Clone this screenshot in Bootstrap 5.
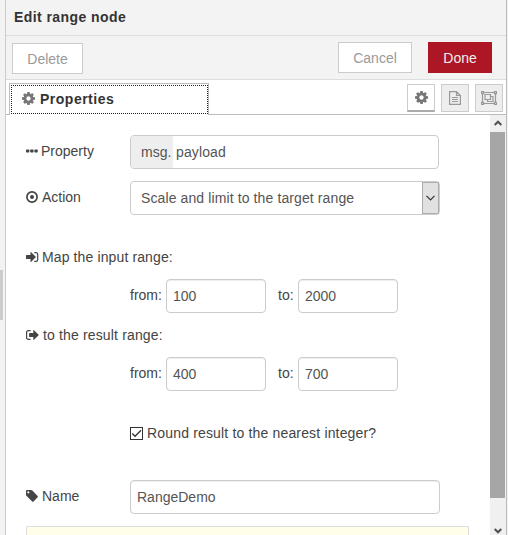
<!DOCTYPE html>
<html lang="en">
<head>
<meta charset="utf-8">
<meta name="viewport" content="width=device-width, initial-scale=1">
<title>Edit range node</title>
<link href="https://cdn.jsdelivr.net/npm/bootstrap@5.3.0/dist/css/bootstrap.min.css" rel="stylesheet">
<style>
body{font:14px/20px "Liberation Sans",Arial,sans-serif;color:#444;background:#fff}
svg{display:block;flex:none}
.shell{height:535px}
.gutter{width:6px;background:#f3f3f3;border-right:1px solid #ccc}
.grip{width:3px;height:50px;background:#ccc;margin-top:55px}
.edge{width:2px;background:#f3f3f3;border-left:1px solid #bbb}
.tray-title{height:36px;background:#f3f3f3;border-bottom:1px solid #ddd;padding:0 0 2px 8px;color:#333;font-weight:700;letter-spacing:.42px}
.tray-bar{height:44px;background:#f3f3f3;border-bottom:1px solid #ddd;padding:6px 14px 0 6px}
.tray-bar .btn{height:31px;border-radius:0;font-size:14px;line-height:20px;padding:5px 14px;background:#fff;border:1px solid #ccc;color:#999}
.tray-bar .btn-done{background:#ad1625;border-color:#ad1625;color:#eee;width:64px}
.btn-cancel{width:74px}
.btn-delete{width:71px;margin-top:1px}
.tabs-strip{height:35px;border-bottom:1px solid #bbb;padding:3px 3px 0 3px}
.tab-main{width:200px;height:32px;border:1px solid #bbb;border-bottom:0;background:#fff;padding:1px 0 1px 1px;margin-bottom:-1px}
.tab-focus{border:1px dotted #222;height:29px;padding:0 0 2px 10px;gap:5px;color:#333;font-weight:700;letter-spacing:.5px}
.tab-focus svg{color:#777}
.tab-set{gap:6px}
.tab-small{width:28px;height:28px;border:1px solid #ccc;background:#eee;color:#999;margin-top:1px}
.tab-small.on{background:#fff;border-bottom:2px solid #aaa;color:#777}
.form-area{padding:20px 0 0 20px;width:484px}
.bar{width:16px;background:#f0f0f0;color:#505050}
.bar-btn{height:17px;padding-bottom:1px}
.bar-end{padding-bottom:1px}
.thumb{height:366px;background:#a6a6a6;width:15px}
.lbl{width:104px;padding-bottom:2px;gap:4px}
.lbl-prop{gap:3px}
.field{height:34px;border:1px solid #ccc;border-radius:4px;background:#fff;color:#555;font-size:14px;line-height:20px;padding:0 6px;box-shadow:inset 0 1px 1px rgba(0,0,0,.07)}
.field:focus{outline:0}
.w-wide{width:310px}
.w-num{width:100px}
.typed{width:309px;padding:0;box-shadow:none;overflow:hidden}
.prefix{width:42px;background:#eee;padding-left:10px}
.payload{padding-left:3px;letter-spacing:.12px}
.pick{padding:0 0 0 10px;box-shadow:none;letter-spacing:.11px}
.drop{width:17px;height:32px;background:#e1e1e1;border:1px solid #adadad;color:#333}
.mark-box{width:13px;height:13px;border:1px solid #333}
.tip{width:443px;height:9px;background:#ffffe9;border:1px solid #ddd;border-bottom:0;border-radius:2px 2px 0 0;margin-top:12px}
.range-row{padding-left:104px}
.from{width:36px;padding-bottom:2px}
.to{width:20px;margin-left:12px;padding-bottom:2px}
.row-action{margin-top:12px}
.sect{height:20px;margin-top:32px;margin-bottom:12px;gap:3px;letter-spacing:.12px}
.sect-b{margin-top:12px;gap:4px;letter-spacing:.15px}
.round-row{height:20px;margin-top:32px;letter-spacing:.165px}
.name-row{margin-top:37px}
</style>
<script src="https://cdn.jsdelivr.net/npm/bootstrap@5.3.0/dist/js/bootstrap.bundle.min.js"></script>
</head>
<body class="overflow-hidden">
<svg width="0" height="0" class="d-none"><symbol id="cog" viewBox="0 -128 1536 1536"><path fill="currentColor" d="M1024 640q0-106-75-181t-181-75-181 75-75 181 75 181 181 75 181-75 75-181zm512-109v222q0 12-8 23t-20 13l-185 28q-19 54-39 91 35 50 107 138 10 12 10 25t-9 23q-27 37-99 108t-94 71q-12 0-26-9l-138-108q-44 23-91 38-16 136-29 186-7 28-36 28h-222q-14 0-24.500-8.500t-11.500-21.500l-28-184q-49-16-90-37l-141 107q-10 9-25 9-14 0-25-11-126-114-165-168-7-10-7-23 0-12 8-23 15-21 51-66.500t54-70.500q-27-50-41-99l-183-27q-13-2-21-12.500t-8-23.500v-222q0-12 8-23t19-13l186-28q14-46 39-92-40-57-107-138-10-12-10-24 0-10 9-23 26-36 98.500-107.500t94.500-71.500q13 0 26 10l138 107q44-23 91-38 16-136 29-186 7-28 36-28h222q14 0 24.500 8.500t11.500 21.500l28 184q49 16 90 37l142-107q9-9 24-9 13 0 25 10 129 119 165 170 7 8 7 22 0 12-8 23-15 21-51 66.500t-54 70.500q26 50 41 98l183 28q13 2 21 12.500t8 23.500z"/></symbol></svg>
<div class="shell d-flex">
  <div class="gutter d-flex align-items-center flex-shrink-0"><div class="grip"></div></div>
  <main class="d-flex flex-column flex-grow-1">
    <header class="tray-title d-flex align-items-center">Edit range node</header>
    <div class="tray-bar d-flex">
      <button class="btn btn-delete">Delete</button>
      <button class="btn btn-cancel ms-auto me-3">Cancel</button>
      <button class="btn btn-done">Done</button>
    </div>
    <div class="tabs-strip d-flex">
      <div class="tab-main"><div class="tab-focus d-flex align-items-center"><svg width="13" height="13"><use href="#cog"/></svg><span>Properties</span></div></div>
      <div class="d-flex ms-auto tab-set">
        <div class="tab-small on d-flex align-items-center justify-content-center"><svg width="13" height="13"><use href="#cog"/></svg></div>
        <div class="tab-small d-flex align-items-center justify-content-center"><svg width="12" height="14" viewBox="0 0 12 14" fill="none" stroke="currentColor" stroke-width="1.200"><path d="M.6.600h6.900l3.900 3.900v8.900H.6zM7.500.500v4h4M3 6.500h6M3 8.500h6M3 10.500h6"/></svg></div>
        <div class="tab-small d-flex align-items-center justify-content-center"><svg width="16" height="14" viewBox="0 0 16 14" fill="none" stroke="currentColor" stroke-width="1.200"><path d="M3 1.500h10M3 12.500h10M1.500 3v8M14.500 3v8M.6.600h2v2h-2zM13.400.600h2v2h-2zM.6 11.400h2v2h-2zM13.400 11.400h2v2h-2zM4 3.500h5.500v5H4zM9.500 5.500H12v5H6.500v-2"/></svg></div>
      </div>
    </div>
    <div class="d-flex flex-grow-1 overflow-hidden">
      <form class="form-area">
        <div class="d-flex align-items-center">
          <label class="lbl lbl-prop d-flex align-items-center"><svg width="12" height="12" viewBox="0 0 12 12" fill="currentColor"><rect x="0" y="4.500" width="3.300" height="3" rx=".7"/><rect x="4.200" y="4.500" width="3.300" height="3" rx=".7"/><rect x="8.400" y="4.500" width="3.300" height="3" rx=".7"/></svg><span>Property</span></label>
          <div class="field typed d-flex"><span class="prefix d-flex align-items-center">msg.</span><span class="payload d-flex align-items-center">payload</span></div>
        </div>
        <div class="d-flex align-items-center row-action">
          <label class="lbl d-flex align-items-center"><svg width="12" height="12" viewBox="0 0 12 12"><circle cx="6" cy="6" r="5.100" fill="none" stroke="currentColor" stroke-width="1.700"/><circle cx="6" cy="6" r="2" fill="currentColor"/></svg><span>Action</span></label>
          <div class="field pick w-wide d-flex align-items-center justify-content-between"><span>Scale and limit to the target range</span><span class="drop d-flex align-items-center justify-content-center"><svg width="9" height="6" viewBox="0 0 9 6" fill="none" stroke="currentColor" stroke-width="1.200"><path d="M.5.800l4 4 4-4"/></svg></span></div>
        </div>
        <div class="sect d-flex align-items-center"><svg width="13" height="12" viewBox="0 0 13 12"><path fill="currentColor" d="M.5 3.900h4V1.600q0-.9.700-.3L9.500 5.500q.5.500 0 1L5.200 10.700q-.7.600-.7-.3V8.100h-4Q0 8.100 0 7.600V4.400q0-.5.500-.5z"/><path fill="none" stroke="currentColor" stroke-width="1.200" d="M8.300 1.600H10a1.700 1.700 0 0 1 1.700 1.700v5.400a1.700 1.700 0 0 1-1.700 1.700H8.300"/></svg><span>Map the input range:</span></div>
        <div class="range-row d-flex align-items-center"><label class="from">from:</label><input class="field w-num" value="100"><label class="to">to:</label><input class="field w-num" value="2000"></div>
        <div class="sect sect-b d-flex align-items-center"><svg width="13" height="12" viewBox="0 0 13 12"><path fill="currentColor" d="M3.600 3.900h3.700V1.600q0-.9.700-.3l4.400 4.200q.5.500 0 1L8 10.700q-.7.600-.7-.3V8.100H3.600q-.5 0-.5-.5V4.400q0-.5.500-.5z"/><path fill="none" stroke="currentColor" stroke-width="1.200" d="M4.600 1.600H2.300A1.700 1.700 0 0 0 .6 3.300v5.400a1.700 1.700 0 0 0 1.700 1.700h2.300"/></svg><span>to the result range:</span></div>
        <div class="range-row d-flex align-items-center"><label class="from">from:</label><input class="field w-num" value="400"><label class="to">to:</label><input class="field w-num" value="700"></div>
        <div class="range-row round-row d-flex align-items-center"><span class="mark-box me-1"><svg width="11" height="11" viewBox="0 0 11 11" fill="none" stroke="#333" stroke-width="1.300"><path d="M1.300 5.500l2.800 2.800L10 2.300"/></svg></span><span>Round result to the nearest integer?</span></div>
        <div class="d-flex align-items-center name-row">
          <label class="lbl d-flex align-items-center"><svg width="12" height="12" viewBox="0 0 12 12"><path fill="currentColor" fill-rule="evenodd" d="M0 1a1 1 0 0 1 1-1h4q.7 0 1.300.6l5.300 5.300q.7.700 0 1.400l-4 4.100q-.7.700-1.400 0L.7 6.100Q0 5.500 0 4.800zM2.300 1.200a1.100 1.100 0 1 0 .01 0z"/></svg><span>Name</span></label>
          <input class="field w-wide" value="RangeDemo">
        </div>
        <div class="tip"></div>
      </form>
      <div class="bar flex-shrink-0 d-flex flex-column">
        <div class="bar-btn d-flex align-items-center justify-content-center"><svg width="8" height="6" viewBox="0 0 8 6" fill="none" stroke="currentColor" stroke-width="2"><path d="M.7 5L4 1.700 7.300 5"/></svg></div>
        <div class="thumb"></div>
        <div class="bar-end mt-auto d-flex justify-content-center"><svg width="8" height="6" viewBox="0 0 8 6" fill="none" stroke="currentColor" stroke-width="2"><path d="M.7 1L4 4.300 7.300 1"/></svg></div>
      </div>
    </div>
  </main>
  <div class="edge flex-shrink-0"></div>
</div>
</body>
</html>
